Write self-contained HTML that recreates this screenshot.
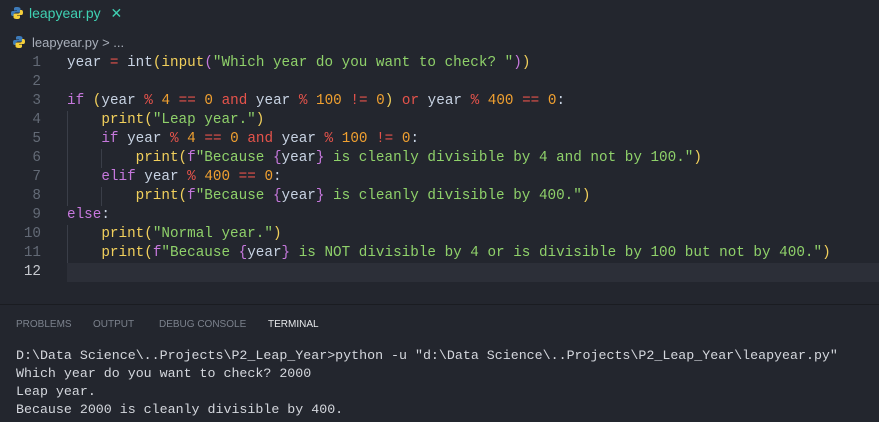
<!DOCTYPE html><html><head><style>
body{margin:0;width:879px;height:421px;background:#23262e;overflow:hidden;font-family:"Liberation Sans",sans-serif;position:relative}
.tabbar{position:absolute;top:0;left:0;width:879px;height:30px;background:#23262e}
.tab{position:absolute;left:10px;top:5px;color:#3fd0b2;font-size:14px}
.crumb{position:absolute;left:12px;top:35px;color:#a9afba;font-size:13px}
.code{position:absolute;top:54px;left:0;font-family:"Liberation Mono",monospace;font-size:14.3px;line-height:19px;white-space:pre}
.ln{position:absolute;left:0;width:41px;text-align:right;color:#636a76}
.tx{position:absolute;left:67px;color:#c8d3e3}
.cur{position:absolute;left:67px;top:209px;width:812px;height:19px;background:#2c2f38}
.g{position:absolute;width:1px;background:#3a3e48}
.i{color:#c8d3e3}.r{color:#e5534b}.o{color:#f0a030}.p{color:#c678dd}.y{color:#f2d05c}.s{color:#8fd16a}
.panel{position:absolute;top:304px;left:0;width:879px;height:117px;border-top:1px solid #1a1c21}
.ptabs{position:absolute;top:14px;left:16px;font-size:10px;color:#7c828d;white-space:nowrap}
.ptabs span{position:absolute;top:0}
.term{position:absolute;top:42px;left:16px;font-family:"Liberation Mono",monospace;font-size:13.3px;line-height:18px;color:#d4d7dd;white-space:pre}
</style></head><body>
<div class="tabbar"><div class="tab"><svg width="14" height="14" viewBox="0 0 14 14" style="vertical-align:-2px;margin-right:5px"><path d="M7 1c-3 0-3 1-3 2v1.5h3v.5H2.5C1 5 1 7 1 7.5S1 10 2.5 10H4V8.5C4 7 5 6.5 6 6.5h3c1 0 1.5-.5 1.5-1.5V3C10.5 1.5 9 1 7 1z" fill="#3d7ab8"/><path d="M7 13c3 0 3-1 3-2V9.5H7V9h4.5C13 9 13 7 13 6.5S13 4 11.5 4H10v1.5C10 7 9 7.5 8 7.5H5c-1 0-1.5.5-1.5 1.5v2C3.5 12.5 5 13 7 13z" fill="#f4cf3c"/></svg>leapyear.py <span style="margin-left:6px">✕</span></div></div>
<div class="crumb"><svg width="14" height="14" viewBox="0 0 14 14" style="vertical-align:-2px;margin-right:6px"><path d="M7 1c-3 0-3 1-3 2v1.5h3v.5H2.5C1 5 1 7 1 7.5S1 10 2.5 10H4V8.5C4 7 5 6.5 6 6.5h3c1 0 1.5-.5 1.5-1.5V3C10.5 1.5 9 1 7 1z" fill="#3d7ab8"/><path d="M7 13c3 0 3-1 3-2V9.5H7V9h4.5C13 9 13 7 13 6.5S13 4 11.5 4H10v1.5C10 7 9 7.5 8 7.5H5c-1 0-1.5.5-1.5 1.5v2C3.5 12.5 5 13 7 13z" fill="#f4cf3c"/></svg>leapyear.py &gt; ...</div>
<div class="code">
<div class="cur"></div>
<div class="g" style="left:67px;top:57px;height:95px"></div>
<div class="g" style="left:101px;top:95px;height:19px"></div>
<div class="g" style="left:101px;top:133px;height:19px"></div>
<div class="g" style="left:67px;top:171px;height:38px"></div>
<div class="ln" style="top:0">1</div><div class="ln" style="top:19px">2</div><div class="ln" style="top:38px">3</div><div class="ln" style="top:57px">4</div><div class="ln" style="top:76px">5</div><div class="ln" style="top:95px">6</div><div class="ln" style="top:114px">7</div><div class="ln" style="top:133px">8</div><div class="ln" style="top:152px">9</div><div class="ln" style="top:171px">10</div><div class="ln" style="top:190px">11</div><div class="ln" style="top:209px;color:#c5c8ce">12</div>
<div class="tx" style="top:0">year <span class="r">=</span> int<span class="y">(</span><span class="y">input</span><span class="p">(</span><span class="s">"Which year do you want to check? "</span><span class="p">)</span><span class="y">)</span></div>
<div class="tx" style="top:38px"><span class="p">if</span> <span class="y">(</span>year <span class="r">%</span> <span class="o">4</span> <span class="r">==</span> <span class="o">0</span> <span class="r">and</span> year <span class="r">%</span> <span class="o">100</span> <span class="r">!=</span> <span class="o">0</span><span class="y">)</span> <span class="r">or</span> year <span class="r">%</span> <span class="o">400</span> <span class="r">==</span> <span class="o">0</span>:</div>
<div class="tx" style="top:57px">    <span class="y">print(</span><span class="s">"Leap year."</span><span class="y">)</span></div>
<div class="tx" style="top:76px">    <span class="p">if</span> year <span class="r">%</span> <span class="o">4</span> <span class="r">==</span> <span class="o">0</span> <span class="r">and</span> year <span class="r">%</span> <span class="o">100</span> <span class="r">!=</span> <span class="o">0</span>:</div>
<div class="tx" style="top:95px">        <span class="y">print(</span><span class="p">f</span><span class="s">"Because </span><span class="p">{</span>year<span class="p">}</span><span class="s"> is cleanly divisible by 4 and not by 100."</span><span class="y">)</span></div>
<div class="tx" style="top:114px">    <span class="p">elif</span> year <span class="r">%</span> <span class="o">400</span> <span class="r">==</span> <span class="o">0</span>:</div>
<div class="tx" style="top:133px">        <span class="y">print(</span><span class="p">f</span><span class="s">"Because </span><span class="p">{</span>year<span class="p">}</span><span class="s"> is cleanly divisible by 400."</span><span class="y">)</span></div>
<div class="tx" style="top:152px"><span class="p">else</span>:</div>
<div class="tx" style="top:171px">    <span class="y">print(</span><span class="s">"Normal year."</span><span class="y">)</span></div>
<div class="tx" style="top:190px">    <span class="y">print(</span><span class="p">f</span><span class="s">"Because </span><span class="p">{</span>year<span class="p">}</span><span class="s"> is NOT divisible by 4 or is divisible by 100 but not by 400."</span><span class="y">)</span></div>
</div>
<div class="panel">
<div class="ptabs"><span style="left:0">PROBLEMS</span><span style="left:77px">OUTPUT</span><span style="left:143px">DEBUG CONSOLE</span><span style="left:252px;color:#e7e9ec">TERMINAL</span></div>
<div class="term">D:\Data Science\..Projects\P2_Leap_Year&gt;python -u "d:\Data Science\..Projects\P2_Leap_Year\leapyear.py"
Which year do you want to check? 2000
Leap year.
Because 2000 is cleanly divisible by 400.</div>
</div>
</body></html>
